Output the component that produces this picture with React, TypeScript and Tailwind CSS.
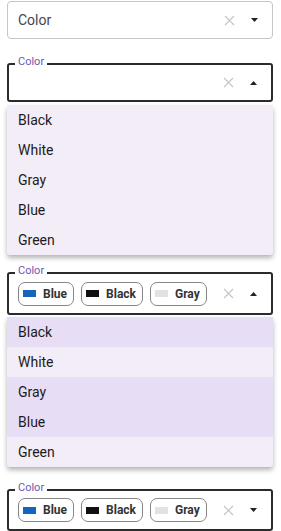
import React from "react";

const COLORS = ["Black", "White", "Gray", "Blue", "Green"];

const chips = [
    { name: "Blue", swatch: "bg-[#1565c0]" },
    { name: "Black", swatch: "bg-[#111111]" },
    { name: "Gray", swatch: "bg-[#e2e2e2]" },
];

function ClearIcon() {
    return (
        <svg width="11" height="11" viewBox="0 0 11 11" className="shrink-0">
            <path d="M1 1 L10 10 M10 1 L1 10" stroke="#c4c4c4" strokeWidth="1.1" fill="none" />
        </svg>
    );
}

function Caret({ up }: { up?: boolean }) {
    return (
        <svg width="7" height="4" viewBox="0 0 7 4" className="shrink-0">
            {up ? <path d="M0 4 L3.5 0 L7 4 Z" fill="#222" /> : <path d="M0 0 L7 0 L3.5 4 Z" fill="#222" />}
        </svg>
    );
}

function Actions({ up }: { up?: boolean }) {
    return (
        <div className="ml-auto flex items-center gap-[16px] pr-[14px]">
            <ClearIcon />
            <Caret up={up} />
        </div>
    );
}

function Label() {
    return (
        <span className="absolute -top-[10px] left-[6px] bg-white px-[3px] text-[11px] leading-[14px] text-[#6f56b4]">Color</span>
    );
}

function Chips() {
    return (
        <div className="flex items-center gap-[7px]">
            {chips.map(c => (
                <div key={c.name} className="h-[24px] rounded-[7px] border border-[#858585] pl-[4px] pr-[6px] flex items-center gap-[7px]">
                    <span className={`w-[13px] h-[7px] ${c.swatch}`} />
                    <span className="text-[12px] font-bold text-[#333]">{c.name}</span>
                </div>
            ))}
        </div>
    );
}

function Menu({ selected }: { selected: string[] }) {
    return (
        <div className="bg-[#f3edf7] rounded-[3px] shadow-[0_3px_5px_rgba(0,0,0,0.3)]">
            {COLORS.map(c => (
                <div key={c} className={`h-[30px] flex items-center pl-[11px] text-[14px] text-[#1d1b20] ${selected.includes(c) ? "bg-[#e7def6]" : ""}`}>
                    {c}
                </div>
            ))}
        </div>
    );
}

export default function App() {
    return (
        <div className="w-[281px] h-[531px] overflow-hidden bg-white" style={{ fontFamily: "Roboto, 'Liberation Sans', sans-serif" }}>
            <div className="flex flex-col w-[266px] ml-[7px] pt-[1px]">
                <div className="h-[38px] rounded-[4px] border border-[#c6c6c6] flex items-center pl-[10px]">
                    <span className="text-[14px] text-[#49454f]">Color</span>
                    <Actions />
                </div>

                <div className="relative mt-[24px] h-[39px] rounded-[3px] border-2 border-[#2b2b2b] flex items-center pl-[10px]">
                    <Label />
                    <Actions up />
                </div>
                <div className="mt-[3px]">
                    <Menu selected={[]} />
                </div>

                <div className="relative mt-[17px] h-[43px] rounded-[3px] border-2 border-[#2b2b2b] flex items-center pl-[9px]">
                    <Label />
                    <Chips />
                    <Actions up />
                </div>
                <div className="mt-[2px]">
                    <Menu selected={["Black", "Gray", "Blue"]} />
                </div>

                <div className="relative mt-[22px] h-[42px] rounded-[3px] border-2 border-[#2b2b2b] flex items-center pl-[9px]">
                    <Label />
                    <Chips />
                    <Actions />
                </div>
            </div>
        </div>
    );
}
